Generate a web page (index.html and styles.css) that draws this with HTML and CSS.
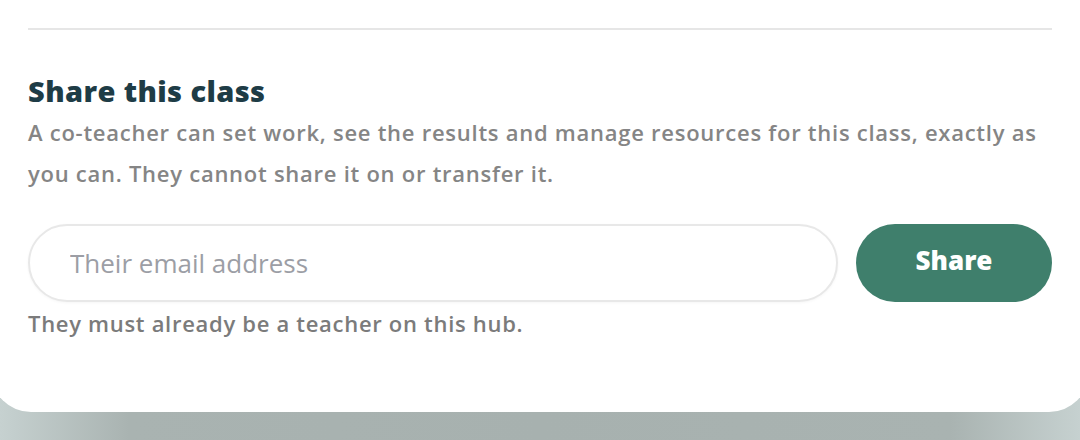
FILE: index.html
```html
<!DOCTYPE html>
<html lang="en">
<head>
<meta charset="utf-8">
<title>Share this class</title>
<link rel="stylesheet" href="styles.css">
</head>
<body>
<div class="page">
  <section class="card">
    <hr class="divider">
    <h2 class="title">Share this class</h2>
    <p class="desc">A co-teacher can set work, see the results and manage resources for this class, exactly as you can. They cannot share it on or transfer it.</p>
    <form class="share-form">
      <input class="email" type="email" placeholder="Their email address">
      <button class="share-btn" type="button">Share</button>
    </form>
    <p class="hint">They must already be a teacher on this hub.</p>
  </section>
</div>
</body>
</html>
```
FILE: styles.css
```css
html, body {
  margin: 0;
  padding: 0;
}
body {
  width: 1080px;
  height: 440px;
  overflow: hidden;
  font-family: "Open Sans", "Noto Sans", sans-serif;
  background: linear-gradient(90deg, #c6d1d0 0%, #a9b3b1 12%, #a7b1af 50%, #a9b3b1 88%, #c6d1d0 100%);
}
.page {
  height: 440px;
}
.card {
  background: #ffffff;
  margin: 0 -9px;
  padding: 28px 37px 0;
  height: 384px;
  border-radius: 0 0 40px 40px;
}
.divider {
  border: 0;
  height: 2px;
  background: #e6e6e6;
  margin: 0;
}
.title {
  margin: 43px 0 0;
  font-size: 29px;
  line-height: 36px;
  font-weight: 800;
  letter-spacing: 0.4px;
  color: #1e3c46;
}
.desc {
  margin: 3px 0 0;
  font-size: 22px;
  line-height: 41px;
  font-weight: 600;
  letter-spacing: 0.74px;
  color: #858585;
}
.share-form {
  display: flex;
  gap: 18px;
  margin-top: 30px;
}
.email {
  flex: 1;
  height: 78px;
  box-sizing: border-box;
  border: 2px solid #e8e8e8;
  border-radius: 39px;
  padding: 0 40px;
  font-family: inherit;
  font-size: 26px;
  color: #333;
  background: #fff;
  box-shadow: 0 1px 3px rgba(0,0,0,0.04);
  outline: none;
}
.email::placeholder {
  color: #9c9ea5;
}
.share-btn {
  width: 196px;
  height: 78px;
  border: 0;
  border-radius: 39px;
  background: #3f7f6c;
  color: #ffffff;
  font-family: inherit;
  font-size: 26px;
  font-weight: 800;
  padding: 0 0 6px;
  cursor: pointer;
}
.hint {
  margin: 6px 0 0;
  font-size: 22px;
  line-height: 30px;
  font-weight: 600;
  letter-spacing: 0.7px;
  color: #7b7b7b;
}
```
